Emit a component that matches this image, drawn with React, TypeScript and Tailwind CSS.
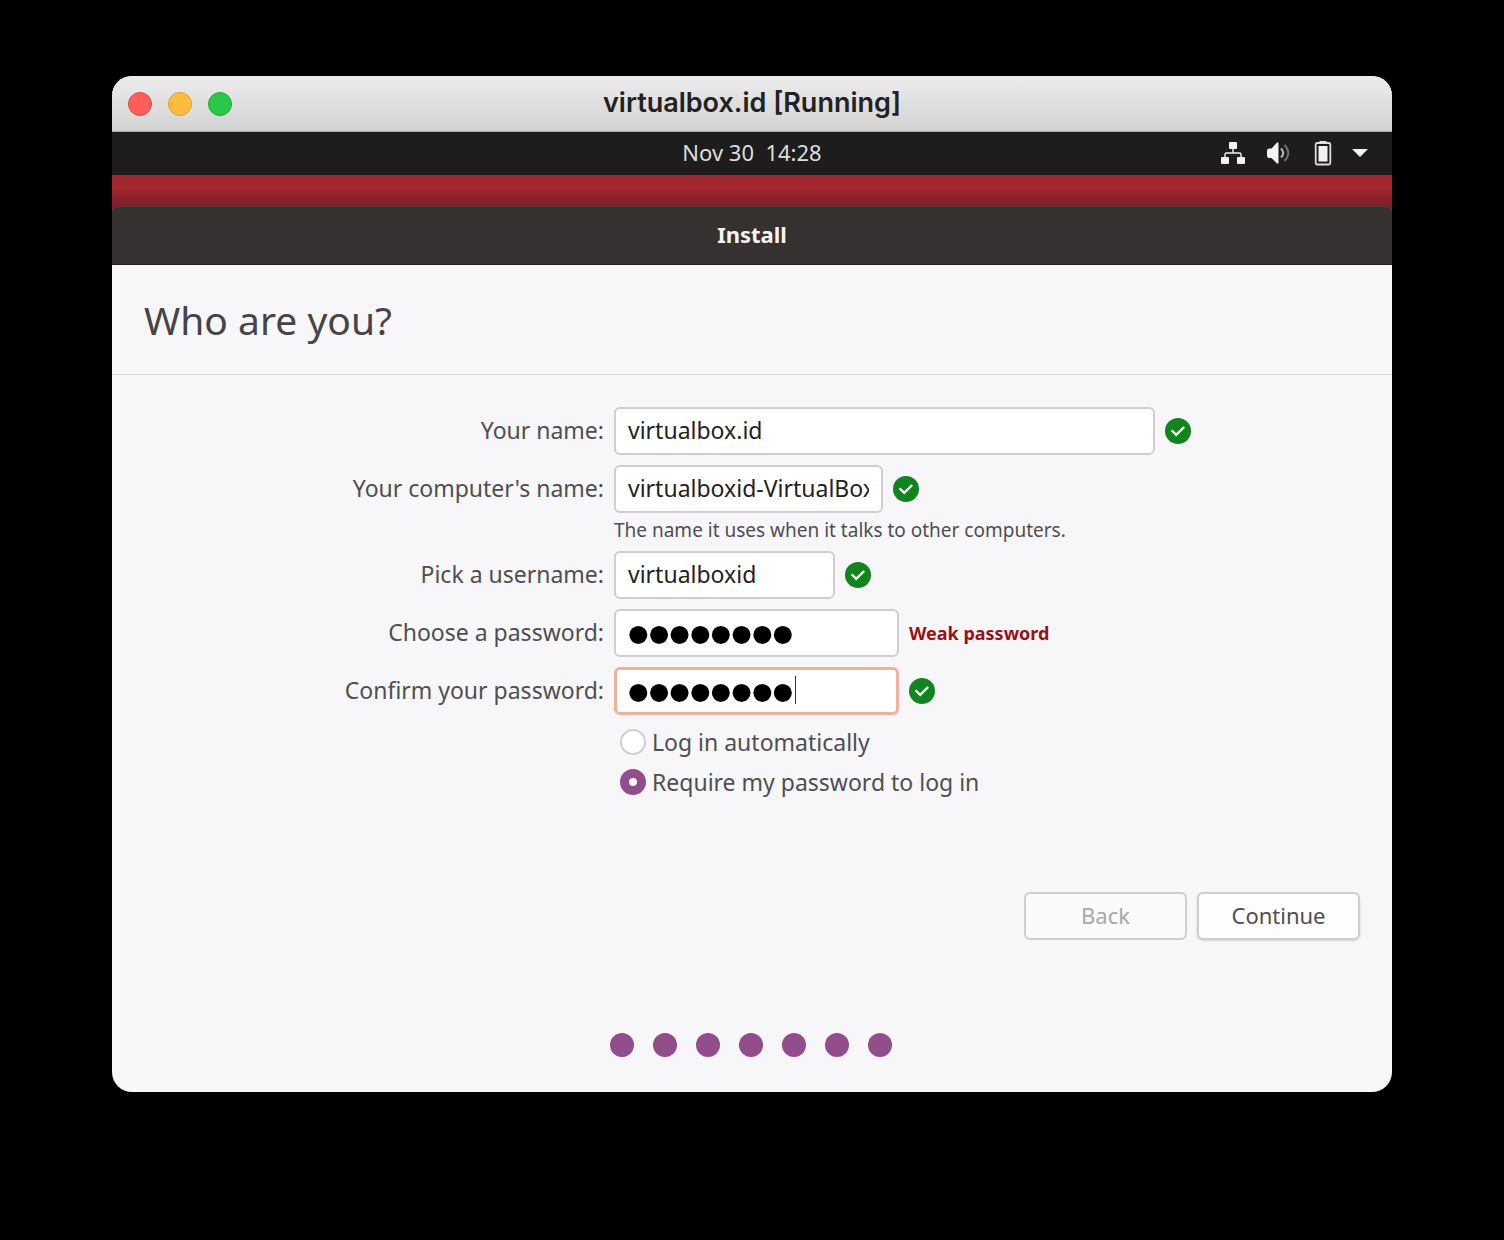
import type { ReactNode } from 'react';

function CheckBadge() {
  return (
    <svg viewBox="0 0 26 26" className="size-[26px] shrink-0" role="img" aria-label="Valid">
      <circle cx="13" cy="13" r="13" fill="#12841f" />
      <path d="M6.6 12.2 L11.2 16.8 L19.2 9" fill="none" stroke="#fff" strokeWidth="2.3" />
    </svg>
  );
}

function NetworkIcon() {
  return (
    <svg viewBox="0 0 26 24" className="h-6 w-[26px]" fill="#f2f2f2" aria-hidden="true">
      <rect x="9" y="1" width="8" height="7" rx="1" />
      <rect x="1" y="16" width="8" height="7" rx="1" />
      <rect x="17" y="16" width="8" height="7" rx="1" />
      <path d="M13 7 V12 M5 17 V13.500 Q5 12 6.500 12 H19.500 Q21 12 21 13.500 V17" fill="none" stroke="#f2f2f2" strokeWidth="1.400" />
    </svg>
  );
}

function VolumeIcon() {
  return (
    <svg viewBox="0 0 24 24" className="size-6" aria-hidden="true">
      <path d="M1 10 Q1 7.500 3 7.500 H5.500 L11 1.500 H12.500 V22.500 H11 L5.500 17 H3 Q1 17 1 14.500 Z" fill="#f2f2f2" />
      <path d="M15 7.500 Q19.500 12 15 16.500" fill="none" stroke="#b8b8b8" strokeWidth="2" />
      <path d="M18.500 4 Q26 12 18.500 20" fill="none" stroke="#6d6d6d" strokeWidth="2" />
    </svg>
  );
}

function BatteryIcon() {
  return (
    <svg viewBox="0 0 18 26" className="h-[26px] w-[18px]" aria-hidden="true">
      <path d="M5.500 1 H12.500 V3 H5.500 Z" fill="#e6e6e6" />
      <rect x="1.700" y="3" width="14.600" height="21.500" rx="1.500" fill="none" stroke="#dcdcdc" strokeWidth="1.800" />
      <rect x="4.500" y="6" width="9" height="15.500" fill="#f2f2f2" />
    </svg>
  );
}

function Row({ id, label, children }: { id: string; label: string; children: ReactNode }) {
  return (
    <>
      <label htmlFor={id} className="text-right leading-[46px]">
        {label}
      </label>
      <div className="flex items-center gap-[10px]">{children}</div>
    </>
  );
}

const textField = 'h-12 rounded-md border-2 border-[#d0cdd2] bg-white px-3 pb-[2px] text-[#222] outline-none';
const passwordField =
  "h-12 w-[285px] rounded-md bg-white pt-1 font-['Liberation_Sans',sans-serif] text-[59px] leading-none text-black outline-none [-webkit-text-stroke:2px_black]";
const radio =
  'size-[26px] appearance-none rounded-full border-2 border-[#d0cdd2] bg-white checked:border-9 checked:border-[#924d8b]';

export default function App() {
  return (
    <main className="min-h-screen bg-black px-28 py-[76px] font-['Noto_Sans',sans-serif] text-[22px]">
      <section className="overflow-hidden rounded-[20px] bg-[#f7f6f8]">
        <header className="grid h-14 grid-cols-[1fr_auto_1fr] items-center border-b border-[#a9a9a9] bg-linear-to-b from-[#ececec] to-[#d3d3d3] px-4">
          <div className="flex gap-4">
            <button aria-label="Close" className="size-6 rounded-full border border-[#e2463f] bg-[#ff5f57]" />
            <button aria-label="Minimize" className="size-6 rounded-full border border-[#e0a030] bg-[#febc3c]" />
            <button aria-label="Zoom" className="size-6 rounded-full border border-[#1dad2b] bg-[#28c84a]" />
          </div>
          <h1 className="pb-[2px] font-['Inter',sans-serif] text-[27px] leading-8 font-semibold text-[#222]">
            virtualbox.id [Running]
          </h1>
        </header>

        <div className="grid h-[43px] grid-cols-[1fr_auto_1fr] items-center bg-[#1d1d1d] pb-[2px] text-[#dedede]">
          <time className="col-start-2 whitespace-pre">Nov 30  14:28</time>
          <div className="flex items-center justify-end gap-5 pr-6">
            <NetworkIcon />
            <div className="flex items-center gap-6">
              <VolumeIcon />
              <BatteryIcon />
            </div>
            <svg viewBox="0 0 16 8" className="h-2 w-4" aria-hidden="true">
              <path d="M0 0 H16 L8 8 Z" fill="#f2f2f2" />
            </svg>
          </div>
        </div>

        <div className="bg-linear-to-b from-[#a3262c] from-15% to-[#7d1c28] to-35% pt-[31px]">
          <h2 className="h-[59px] rounded-t-lg border-t border-b border-t-[#4b4341] border-b-[#1f1d1d] bg-[#343130] text-center leading-[55px] font-bold text-[#f4f4f4]">
            Install
          </h2>
        </div>

        <h3 className="border-b border-[#d9d8da] px-8 pt-px text-[39px] leading-[108px] text-[#454547]">Who are you?</h3>

        <form onSubmit={(e) => e.preventDefault()}>
          <div className="grid grid-cols-[492fr_778fr] gap-[10px] pt-8 text-[23px] text-[#4f4f51]">
            <Row id="name" label="Your name:">
              <input id="name" defaultValue="virtualbox.id" className={`${textField} w-[541px]`} />
              <CheckBadge />
            </Row>
            <Row id="host" label="Your computer's name:">
              <input id="host" defaultValue="virtualboxid-VirtualBox" className={`${textField} w-[269px]`} />
              <CheckBadge />
            </Row>
            <p className="col-start-2 -mt-[10px] -mb-[6px] text-[19px] leading-[34px]">
              The name it uses when it talks to other computers.
            </p>
            <Row id="user" label="Pick a username:">
              <input id="user" defaultValue="virtualboxid" className={`${textField} w-[221px]`} />
              <CheckBadge />
            </Row>
            <Row id="password" label="Choose a password:">
              <input id="password" type="password" defaultValue="password" className={`${passwordField} border-2 border-[#d0cdd2] px-3`} />
              <strong className="text-[18px] text-[#9b1015]">Weak password</strong>
            </Row>
            <Row id="confirm" label="Confirm your password:">
              <div className="relative flex">
                <input
                  id="confirm"
                  type="password"
                  defaultValue="password"
                  className={`${passwordField} border-3 border-[#f3ae9c] px-[11px]`}
                />
                <span className="absolute top-[9px] left-[181px] h-7 w-px bg-[#333]" />
              </div>
              <CheckBadge />
            </Row>
            <fieldset className="col-start-2 flex flex-col gap-[6px] pl-[6px]">
              <label className="flex h-[34px] items-center gap-[6px]">
                <input type="radio" name="login" className={radio} />
                Log in automatically
              </label>
              <label className="flex h-[34px] items-center gap-[6px]">
                <input type="radio" name="login" defaultChecked className={radio} />
                Require my password to log in
              </label>
            </fieldset>
          </div>

          <div className="flex justify-end gap-[10px] px-8 pt-[93px]">
            <button type="button" disabled className="h-12 w-[163px] rounded-md border-2 border-[#d0cdd2] bg-[#faf9fb] pb-[2px] text-[#a8a8a8]">
              Back
            </button>
            <button type="submit" className="h-12 w-[163px] rounded-md border-2 border-[#d0cdd2] bg-[#fdfcfe] pb-[2px] text-[#4f4f51] shadow-sm">
              Continue
            </button>
          </div>
        </form>

        <div className="flex justify-center gap-[19px] pt-[93px] pr-[2px] pb-[35px]">
          {Array.from({ length: 7 }, (_, i) => (
            <span key={i} className="size-6 rounded-full bg-[#924d8b]" />
          ))}
        </div>
      </section>
    </main>
  );
}
